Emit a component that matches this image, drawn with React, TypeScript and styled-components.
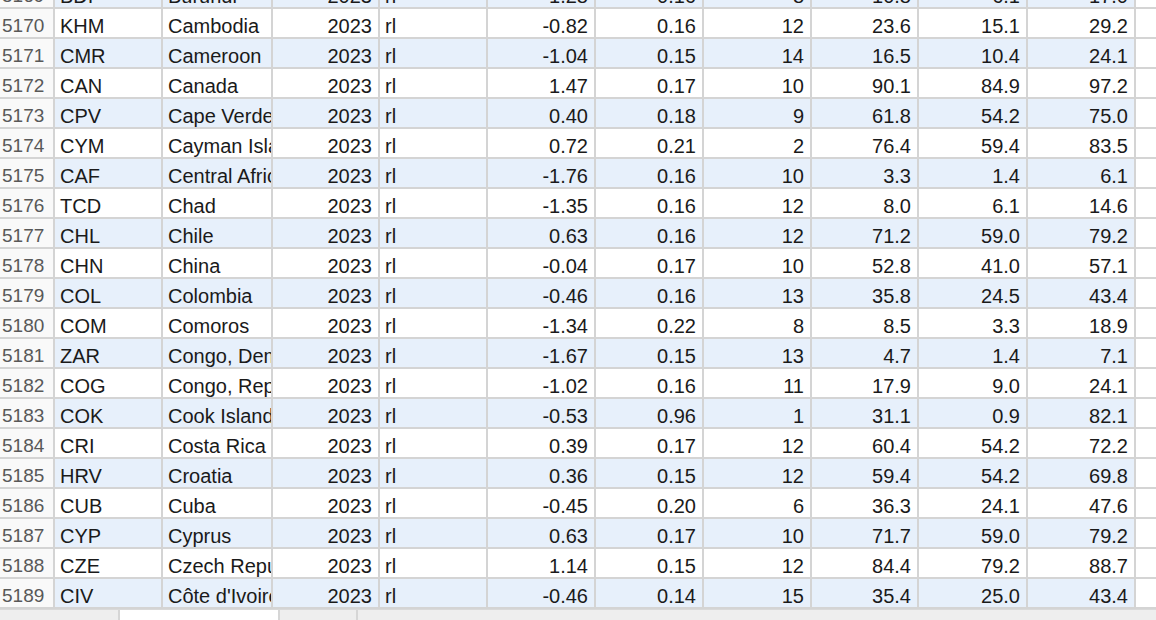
import styled, { createGlobalStyle } from 'styled-components';

type Row = [number, string, string, string, string, string, string, string, string];

const rows: Row[] = [
  [5169, 'BDI', 'Burundi', '-1.28', '0.16', '8', '10.8', '6.1', '17.0'],
  [5170, 'KHM', 'Cambodia', '-0.82', '0.16', '12', '23.6', '15.1', '29.2'],
  [5171, 'CMR', 'Cameroon', '-1.04', '0.15', '14', '16.5', '10.4', '24.1'],
  [5172, 'CAN', 'Canada', '1.47', '0.17', '10', '90.1', '84.9', '97.2'],
  [5173, 'CPV', 'Cape Verde', '0.40', '0.18', '9', '61.8', '54.2', '75.0'],
  [5174, 'CYM', 'Cayman Islands', '0.72', '0.21', '2', '76.4', '59.4', '83.5'],
  [5175, 'CAF', 'Central African Republic', '-1.76', '0.16', '10', '3.3', '1.4', '6.1'],
  [5176, 'TCD', 'Chad', '-1.35', '0.16', '12', '8.0', '6.1', '14.6'],
  [5177, 'CHL', 'Chile', '0.63', '0.16', '12', '71.2', '59.0', '79.2'],
  [5178, 'CHN', 'China', '-0.04', '0.17', '10', '52.8', '41.0', '57.1'],
  [5179, 'COL', 'Colombia', '-0.46', '0.16', '13', '35.8', '24.5', '43.4'],
  [5180, 'COM', 'Comoros', '-1.34', '0.22', '8', '8.5', '3.3', '18.9'],
  [5181, 'ZAR', 'Congo, Dem. Rep.', '-1.67', '0.15', '13', '4.7', '1.4', '7.1'],
  [5182, 'COG', 'Congo, Rep.', '-1.02', '0.16', '11', '17.9', '9.0', '24.1'],
  [5183, 'COK', 'Cook Islands', '-0.53', '0.96', '1', '31.1', '0.9', '82.1'],
  [5184, 'CRI', 'Costa Rica', '0.39', '0.17', '12', '60.4', '54.2', '72.2'],
  [5185, 'HRV', 'Croatia', '0.36', '0.15', '12', '59.4', '54.2', '69.8'],
  [5186, 'CUB', 'Cuba', '-0.45', '0.20', '6', '36.3', '24.1', '47.6'],
  [5187, 'CYP', 'Cyprus', '0.63', '0.17', '10', '71.7', '59.0', '79.2'],
  [5188, 'CZE', 'Czech Republic', '1.14', '0.15', '12', '84.4', '79.2', '88.7'],
  [5189, 'CIV', "Côte d'Ivoire", '-0.46', '0.14', '15', '35.4', '25.0', '43.4'],
];

const GlobalStyle = createGlobalStyle`
  html, body {
    margin: 0;
    padding: 0;
    background: #ffffff;
    overflow: hidden;
  }
  body {
    font-family: "Liberation Sans", Arial, sans-serif;
    color: #1a1a1a;
  }
`;

const Page = styled.div`
  width: 1156px;
  height: 620px;
  display: flex;
  flex-direction: column;
  overflow: hidden;
`;

const Sheet = styled.div`
  height: 609px;
  overflow: hidden;
  flex: none;
`;

// the sheet is scrolled so the first row only shows its bottom edge
const Body = styled.div`
  margin-top: -21px;
`;

const GridRow = styled.div`
  display: grid;
  grid-template-columns: 55px 108px 110px 107px 108px 108px 108px 108px 107px 109px 108px 1fr;
  height: 30px;
`;

const Cell = styled.div<{ $right?: boolean; $shade?: boolean }>`
  box-sizing: border-box;
  height: 30px;
  border-right: 2px solid #d4d4d4;
  border-bottom: 2px solid #d4d4d4;
  background: ${(p) => (p.$shade ? '#e7f0fb' : '#ffffff')};
  padding: 6px 6px 0 5px;
  font-size: 20px;
  line-height: 22px;
  white-space: nowrap;
  overflow: hidden;
  text-align: ${(p) => (p.$right ? 'right' : 'left')};
`;

const RowHead = styled(Cell)`
  background: #f9f9f9;
  color: #585858;
  font-size: 19px;
  padding-left: 2px;
  padding-right: 0;
`;

const EmptyCell = styled(Cell)`
  background: #ffffff;
  border-right: none;
`;

const TabBar = styled.div`
  flex: 1;
  display: flex;
  background: #eeeeee;
  border-top: 1px solid #d9d9d9;
`;

const Tab = styled.div<{ $active?: boolean; $w: number }>`
  width: ${(p) => p.$w}px;
  flex: none;
  background: ${(p) => (p.$active ? '#ffffff' : '#eeeeee')};
  border-right: 2px solid #d6d6d6;
`;

export default function App() {
  return (
    <Page>
      <GlobalStyle />
      <Sheet>
        <Body>
          {rows.map((r, i) => {
            const shade = i % 2 === 0;
            const [num, code, name, v1, v2, n, a, lo, hi] = r;
            return (
              <GridRow key={num}>
                <RowHead>{num}</RowHead>
                <Cell $shade={shade}>{code}</Cell>
                <Cell $shade={shade}>{name}</Cell>
                <Cell $shade={shade} $right>2023</Cell>
                <Cell $shade={shade}>rl</Cell>
                <Cell $shade={shade} $right>{v1}</Cell>
                <Cell $shade={shade} $right>{v2}</Cell>
                <Cell $shade={shade} $right>{n}</Cell>
                <Cell $shade={shade} $right>{a}</Cell>
                <Cell $shade={shade} $right>{lo}</Cell>
                <Cell $shade={shade} $right>{hi}</Cell>
                <EmptyCell />
              </GridRow>
            );
          })}
        </Body>
      </Sheet>
      <TabBar>
        <Tab $w={118} />
        <Tab $w={158} $active />
        <Tab $w={76} />
      </TabBar>
    </Page>
  );
}
